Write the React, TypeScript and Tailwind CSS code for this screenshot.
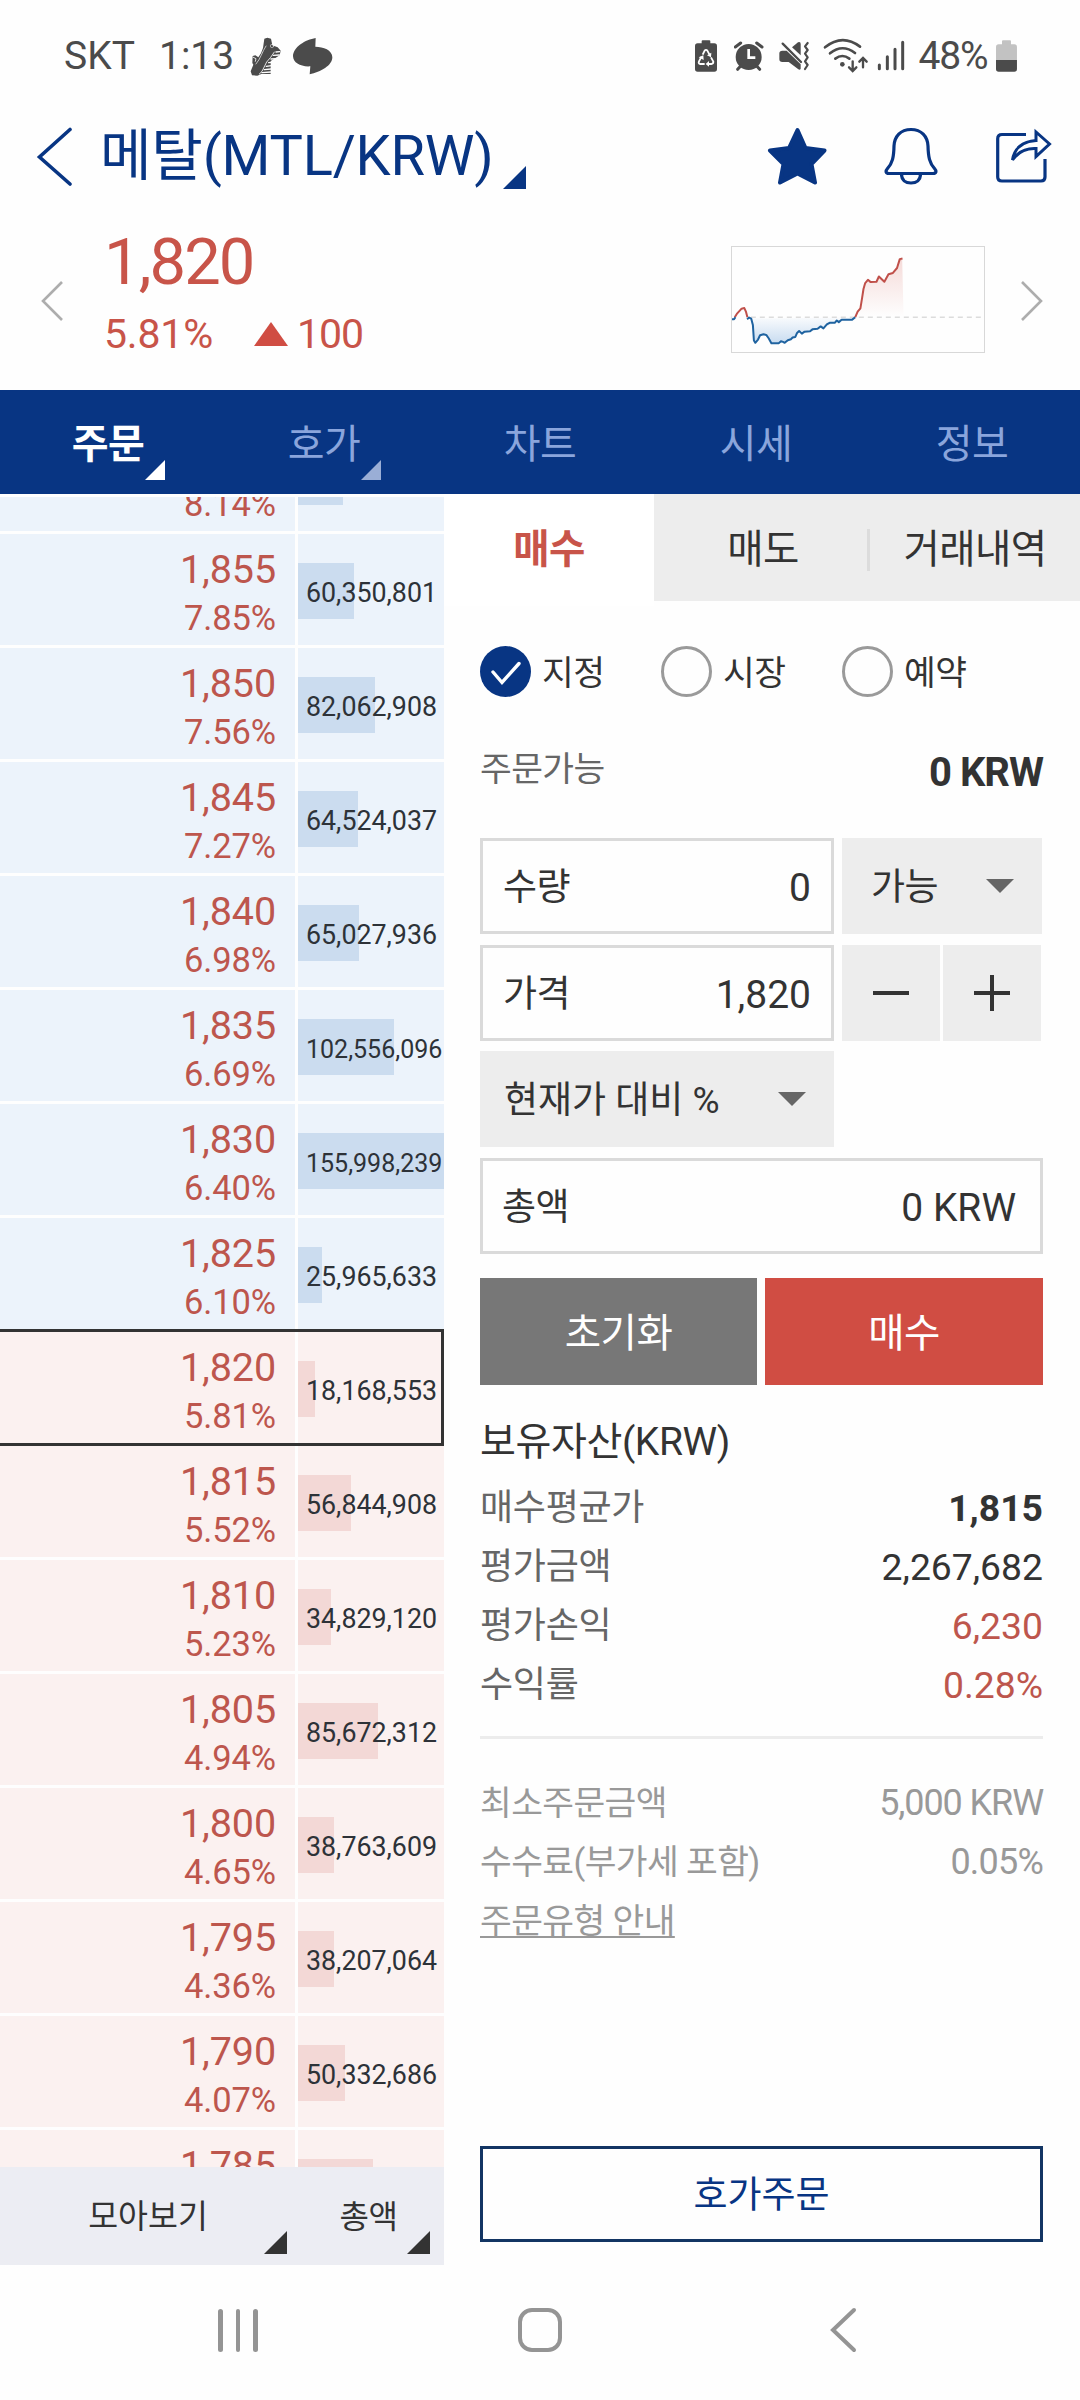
import React from "react";

type Level = { price: string; rate: string; volume: string; amount: number; side: "ask" | "bid"; current?: boolean };

const MAX_AMOUNT = 155998239;

// The first and last levels are scrolled partly out of view, so they carry only their visible fields.
const levels: Level[] = [
  { price: "", rate: "8.14%", volume: "", amount: 48310274, side: "ask" },
  { price: "1,855", rate: "7.85%", volume: "60,350,801", amount: 60350801, side: "ask" },
  { price: "1,850", rate: "7.56%", volume: "82,062,908", amount: 82062908, side: "ask" },
  { price: "1,845", rate: "7.27%", volume: "64,524,037", amount: 64524037, side: "ask" },
  { price: "1,840", rate: "6.98%", volume: "65,027,936", amount: 65027936, side: "ask" },
  { price: "1,835", rate: "6.69%", volume: "102,556,096", amount: 102556096, side: "ask" },
  { price: "1,830", rate: "6.40%", volume: "155,998,239", amount: 155998239, side: "ask" },
  { price: "1,825", rate: "6.10%", volume: "25,965,633", amount: 25965633, side: "ask" },
  { price: "1,820", rate: "5.81%", volume: "18,168,553", amount: 18168553, side: "bid", current: true },
  { price: "1,815", rate: "5.52%", volume: "56,844,908", amount: 56844908, side: "bid" },
  { price: "1,810", rate: "5.23%", volume: "34,829,120", amount: 34829120, side: "bid" },
  { price: "1,805", rate: "4.94%", volume: "85,672,312", amount: 85672312, side: "bid" },
  { price: "1,800", rate: "4.65%", volume: "38,763,609", amount: 38763609, side: "bid" },
  { price: "1,795", rate: "4.36%", volume: "38,207,064", amount: 38207064, side: "bid" },
  { price: "1,790", rate: "4.07%", volume: "50,332,686", amount: 50332686, side: "bid" },
  { price: "1,785", rate: "", volume: "", amount: 80204115, side: "bid" },
];

function Corner({ className }: { className: string }) {
  return (
    <svg viewBox="0 0 10 10" preserveAspectRatio="none" className={className} fill="currentColor">
      <path d="M10 0V10H0Z" />
    </svg>
  );
}

function StatusBar() {
  return (
    <div className="mt-[30px] flex h-[52px] items-center text-[39px] leading-[52px] text-[#4b4b4b]">
      <span className="ml-[64px] w-[95px] tracking-[0px]">SKT</span>
      <span className="w-[81px] tracking-[0px]">1:13</span>
      <svg viewBox="0 0 300 156" className="h-[52px] w-[100px]" fill="currentColor">
        <path d="M73 26 82 23 93 26 97 46 113 52 122 62 119 76 92 93 92 132H64L52 137 36 136 32 124 40 104 37 99 38 78 46 76 55 82 63 70 69 54Z" />
        <g fill="none" stroke="#fefefe" strokeLinecap="round">
          <path d="M103 66 92 82 80 96 66 124 58 132" strokeWidth="2.5" />
          <path d="M108 66 119 65M100 76 118 75M93 87 110 86M86 98 96 97M79 109 94 107M73 119 93 117M66 128 93 126" strokeWidth="4" />
          <path d="M78 48C66 66 62 86 48 102" strokeWidth="2" />
          <path d="M40 82 48 86 46 94" strokeWidth="2.500" />
          <circle cx="96" cy="48" r="5" strokeWidth="1.500" />
        </g>
        <path d="M227 24 226 50C250 50 277 60 277 82 277 107 242 126 209 133L211 109C182 111 160 99 159 79 160 51 196 29 227 24Z" />
      </svg>
      <svg viewBox="30 0 66 156" className="ml-[355px] h-[52px] w-[22px]" fill="currentColor">
        <path d="M50 34Q50 31 53 31H73Q76 31 76 34V40H88Q96 40 96 48V117Q96 125 88 125H38Q30 125 30 117V48Q30 40 38 40H50Z" />
        <g fill="none" stroke="#fff" strokeWidth="5.5" strokeLinejoin="round">
          <path d="M53 74 59 62Q63 57 67 62L73 73" />
          <path d="M78 82 85 95Q85 101 79 102H69" />
          <path d="M59 102H46Q39 101 42 94L49 81" />
        </g>
        <path d="M79 68 78 82 66 76ZM72 93V110L62 102ZM41 82 55 76 56 90Z" fill="#fff" />
      </svg>
      <svg viewBox="146 0 90 156" className="ml-[17px] h-[52px] w-[30px]" fill="currentColor">
        <circle cx="190" cy="81" r="39" />
        <path d="M150 51 166 39M214 39 230 51M166 108 157 118M214 108 223 118" stroke="currentColor" strokeWidth="9" strokeLinecap="round" />
        <path d="M190 57V83H210" fill="none" stroke="#fff" strokeWidth="8" />
      </svg>
      <svg viewBox="280 0 92 156" className="ml-[15px] h-[52px] w-[30.7px]" fill="currentColor">
        <path d="M290 62H303L345 103V116Q343 121 338 118L309 96H290Q281 96 281 88V70Q281 62 290 62Z" />
        <path d="M319 52 337 37Q345 34 345 42V76Z" />
        <path d="M291 41 346 96" stroke="currentColor" strokeWidth="7" strokeLinecap="round" />
        <path d="M366 39 358 49 366 60 358 71 366 82 358 94 366 105 358 117" fill="none" stroke="currentColor" strokeWidth="6.5" strokeLinecap="round" strokeLinejoin="round" />
      </svg>
      <svg viewBox="412 0 248 156" className="ml-[13px] h-[52px] w-[82.7px]" fill="none" stroke="currentColor" strokeWidth="8" strokeLinecap="round">
        <path d="M418 52Q470 10 523 50M433 70Q470 40 508 69M449 86Q470 70 491 86" />
        <circle cx="470" cy="103" r="7" fill="currentColor" stroke="none" />
        <path d="M501 94V122M490 112 501 123 512 112M532 112V85M521 95 532 84 543 95" strokeWidth="7" />
        <path d="M581 105V116M605 80V116M628 58V116M651 37V116" strokeWidth="9" />
      </svg>
      <span className="ml-[13px] w-[78px] tracking-[-1.1px]">48%</span>
      <svg viewBox="936 0 64 156" className="h-[52px] w-[21.3px]">
        <path d="M954 34Q954 31 957 31H978Q981 31 981 34V43H991Q999 43 999 51V90H936V51Q936 43 944 43H954Z" fill="#c2c2c2" />
        <path d="M936 90H999V117Q999 125 991 125H944Q936 125 936 117Z" fill="currentColor" />
      </svg>
    </div>
  );
}

function TitleRow() {
  return (
    <div className="mt-[38px] flex h-[72px] text-[#083583]">
      <svg viewBox="0 0 36 60" className="ml-[36px] mt-[6px] h-[60px] w-[36px]" fill="none" stroke="currentColor" strokeWidth="3.6" strokeLinecap="round">
        <path d="M34 3.500 3.500 31 34 58" strokeLinejoin="miter" />
      </svg>
      <div className="ml-[28px] w-[403px] text-[56px] leading-[73px] tracking-[-0.2px] whitespace-nowrap">메탈(MTL/KRW)</div>
      <Corner className="mt-[46px] h-[23px] w-[23px]" />
      <svg viewBox="0 0 60 58" className="ml-[241px] mt-[7px] h-[58px] w-[60px]" fill="currentColor" stroke="currentColor" strokeWidth="4" strokeLinejoin="round">
        <path d="M30.5 3 38.5 21 57.500 23.500 44.500 37 48 55.500 30.500 46.500 13 55.500 16.500 37 3 23.500 22 21Z" />
      </svg>
      <svg viewBox="0 0 54 58" className="ml-[57px] mt-[7px] h-[58px] w-[54px]" fill="none" stroke="currentColor" strokeWidth="3.2" strokeLinejoin="round">
        <path d="M27 2.500C16.500 2.500 10.500 9.500 10 19 9.800 30 8.500 36 3.500 41.500 1 44.500 2 46.500 5 46.500H49C52 46.500 53 44.500 50.500 41.500 45.500 36 44.300 30 44 19 43.500 9.500 37.500 2.500 27 2.500Z" />
        <path d="M17.500 47C17.500 53 21.500 56 27 56S36.500 53 36.500 47" />
      </svg>
      <svg viewBox="0 0 58 58" className="ml-[57px] mt-[7px] h-[58px] w-[58px]" fill="none" stroke="currentColor" strokeWidth="3.2">
        <path d="M31 7.500H7Q2.700 7.500 2.700 11.800V50Q2.700 54 7 54H46Q50 54 50 50V32" />
        <path d="M17.500 33C19 22 27 14.500 41 13.500V5L54.500 17 41 29.500V21.500C31 21 23 25 17.500 33Z" strokeWidth="3" />
      </svg>
    </div>
  );
}

function Sparkline() {
  return (
    <svg viewBox="0 0 736 320" preserveAspectRatio="none" className="h-[107px] w-[254px] border border-[#d8d8d8]">
      <defs>
        <linearGradient id="up" x1="0" y1="0" x2="0" y2="1">
          <stop offset="0" stopColor="#d04d43" stopOpacity=".2" />
          <stop offset="1" stopColor="#d04d43" stopOpacity="0" />
        </linearGradient>
        <linearGradient id="down" x1="0" y1="0" x2="0" y2="1">
          <stop offset="0" stopColor="#2a78c8" stopOpacity=".02" />
          <stop offset="1" stopColor="#2a78c8" stopOpacity=".25" />
        </linearGradient>
      </defs>
      <path d="M361 214 368 198 376 185 384 135 390 110 397 100 405 106 422 106 429 90 445 106 457 84 472 79 484 62 490 37 497 35 501 210Z" fill="url(#up)" />
      <path d="M55 218 64 270 68 292 82 268H100L115 292H140L155 290 185 275 195 260 240 252 280 240 305 230 330 222H355L361 214Z" fill="url(#down)" />
      <path d="M55 214H736" stroke="#dcdcdc" strokeWidth="1.5" strokeDasharray="5 4" vectorEffect="non-scaling-stroke" />
      <g fill="none" strokeWidth="2" strokeLinejoin="round">
        <path d="M8 214 14 204 28 188 36 186 41 198 45 214" stroke="#c0504a" vectorEffect="non-scaling-stroke" />
        <path d="M0 220H6L10 214" stroke="#1f63a0" vectorEffect="non-scaling-stroke" />
        <path d="M44 220 50 215 56 218 61 238 64 285 68 292 76 282 82 269 92 266 100 268 107 278 115 293H137L143 287 149 289 154 292 163 284 172 281 177 276 185 274 190 262 196 256 204 264 212 258 228 257 235 251 250 249 259 242 267 248 277 236 285 231 300 231 306 224 312 229 320 222H350L360 214" stroke="#1f63a0" vectorEffect="non-scaling-stroke" />
        <path d="M360 214 367 197 375 187 380 155 384 128 389 110 397 100 405 107 422 106 429 90 445 106 457 83 470 79 482 64 490 37 498 35" stroke="#c0504a" vectorEffect="non-scaling-stroke" />
      </g>
    </svg>
  );
}

function Summary() {
  return (
    <div className="mt-[38px] flex h-[160px] text-[#c85449]">
      <svg viewBox="0 0 22 40" className="ml-[41px] mt-[51px] h-[40px] w-[22px]" fill="none" stroke="#adadad" strokeWidth="2.6">
        <path d="M21 1 2 20 21 39" />
      </svg>
      <div className="ml-[41px] w-[600px]">
        <div className="text-[65px] leading-[64px] tracking-[-1.9px]">1,820</div>
        <div className="mt-[16px] flex items-center text-[41px] leading-[48px] tracking-[-0.2px]">
          <span className="w-[150px]">5.81%</span>
          <svg viewBox="0 0 34 24" className="h-[24px] w-[34px]" fill="#d04d43"><path d="M17 0 34 24H0Z" /></svg>
          <span className="ml-[9px] tracking-[-1px]">100</span>
        </div>
      </div>
      <div className="ml-[27px] mt-[16px]"><Sparkline /></div>
      <svg viewBox="0 0 22 40" className="ml-[36px] mt-[51px] h-[40px] w-[22px]" fill="none" stroke="#adadad" strokeWidth="2.6">
        <path d="M1 1 20 20 1 39" />
      </svg>
    </div>
  );
}

function NavTabs() {
  return (
    <nav className="grid h-[104px] grid-cols-5 bg-[#083583] text-center text-[40px] leading-[109px] tracking-[-0.5px] text-[#8aa5dc]">
      <div className="relative font-bold text-white">
        주문
        <Corner className="absolute left-[145px] top-[70px] h-[20px] w-[20px]" />
      </div>
      <div className="relative">
        호가
        <Corner className="absolute left-[145px] top-[70px] h-[20px] w-[20px] text-[#9aaed6]" />
      </div>
      <div>차트</div>
      <div>시세</div>
      <div>정보</div>
    </nav>
  );
}

function LevelRow({ level }: { level: Level }) {
  const ask = level.side === "ask";
  const cell = ask ? "bg-[#ecf3fb]" : "bg-[#fbf1f0]";
  const bar = ask ? "bg-[#cbdcef]" : "bg-[#f3d8d6]";
  const long = level.volume.length > 10;
  return (
    <div className="relative mb-[3px] flex h-[111px] shrink-0 gap-[3px]">
      <div className={`w-[295px] pr-[19px] pt-[15px] text-right text-[#bd564d] ${cell}`}>
        <div className="h-[42px] text-[39.5px] leading-[42px] tracking-[-0.1px]">{level.price}</div>
        <div className="mt-[7px] h-[40px] text-[34.5px] leading-[41px] tracking-[-0.1px]">{level.rate}</div>
      </div>
      <div className={`relative w-[146px] ${cell}`}>
        <div className={`mt-[29px] h-[56px] ${bar}`} style={{ width: `${(level.amount / MAX_AMOUNT) * 100}%` }} />
        <span className={`absolute left-[8px] top-[39px] leading-[41px] text-[#2d3238] ${long ? "text-[25px]" : "text-[26.8px]"}`}>{level.volume}</span>
      </div>
      {level.current && <div className="absolute -left-[3px] -top-[3px] h-[117px] w-[447px] border-[3px] border-[#333]" />}
    </div>
  );
}

function OrderBook() {
  return (
    <section className="w-[444px] pt-[3px]">
      <div className="h-[1670px] overflow-hidden">
        <div className="-mt-[77px] flex flex-col">
          {levels.map((l) => (
            <LevelRow key={l.amount} level={l} />
          ))}
        </div>
      </div>
      <div className="flex h-[98px] bg-[#ecedf3] leading-[101px] text-[#333]">
        <div className="relative w-[296px] text-center text-[32.5px]">
          모아보기
          <Corner className="absolute left-[264px] top-[64px] h-[23px] w-[23px]" />
        </div>
        <div className="relative w-[148px] text-center text-[32px] tracking-[-0.5px]">
          <span className="mr-[3px]">총액</span>
          <Corner className="absolute left-[111px] top-[64px] h-[23px] w-[23px]" />
        </div>
      </div>
    </section>
  );
}

function Radio({ label, on }: { label: string; on?: boolean }) {
  return (
    <div className="flex w-[181px] items-center">
      {on ? (
        <svg viewBox="0 0 51 51" className="h-[51px] w-[51px]">
          <circle cx="25.5" cy="25.5" r="25.5" fill="#083583" />
          <path d="M13 26 22 36.5 39 17.5" fill="none" stroke="#fff" strokeWidth="3.4" strokeLinecap="round" />
        </svg>
      ) : (
        <div className="h-[51px] w-[51px] rounded-full border-[3px] border-[#9a9a9a]" />
      )}
      <span className="ml-[11px] pt-[3px] leading-[51px]">{label}</span>
    </div>
  );
}

function Caret() {
  return (
    <svg viewBox="0 0 28 14" className="h-[14px] w-[28px]" fill="#666"><path d="M0 0H28L14 14Z" /></svg>
  );
}

function OrderForm() {
  return (
    <div className="mt-[49px] flex flex-col text-[37px] leading-[90px] tracking-[-0.5px] text-[#333]">
      <div className="flex gap-[8px]">
        <div className="flex h-[96px] w-[354px] justify-between border-[3px] border-[#dadada] pl-[20px] pr-[20px] pt-[2px]">
          <span>수량</span><span className="text-[39px] tracking-[0px]">0</span>
        </div>
        <div className="flex h-[96px] w-[200px] items-center justify-between bg-[#ededed] pl-[29px] pr-[28px]">
          <span className="mt-[4px]">가능</span><Caret />
        </div>
      </div>
      <div className="mt-[11px] flex gap-[8px]">
        <div className="flex h-[96px] w-[354px] justify-between border-[3px] border-[#dadada] pl-[20px] pr-[20px] pt-[2px]">
          <span>가격</span><span className="text-[39px] tracking-[0px]">1,820</span>
        </div>
        <div className="flex gap-[3px]">
          <div className="flex h-[96px] w-[98px] items-center justify-center bg-[#ededed]"><div className="h-[4px] w-[36px] bg-[#333]" /></div>
          <div className="flex h-[96px] w-[98px] items-center justify-center bg-[#ededed]">
            <svg viewBox="0 0 36 36" className="h-[36px] w-[36px]" stroke="#333" strokeWidth="4"><path d="M0 18H36M18 0V36" /></svg>
          </div>
        </div>
      </div>
      <div className="mt-[10px] flex h-[96px] w-[354px] items-center justify-between bg-[#ededed] pl-[24px] pr-[28px]">
        <span className="mt-[3px] tracking-[0px]">현재가 대비 %</span><Caret />
      </div>
      <div className="mt-[11px] flex h-[96px] w-[563px] justify-between border-[3px] border-[#dadada] pl-[19px] pr-[24px] pt-[2px]">
        <span>총액</span><span className="text-[39px] tracking-[0px]">0 KRW</span>
      </div>
      <div className="mt-[24px] flex gap-[8px] text-center text-[39.5px] leading-[111px] text-white">
        <button className="h-[107px] w-[277px] bg-[#777]">초기화</button>
        <button className="h-[107px] w-[278px] bg-[#d04d43]">매수</button>
      </div>
    </div>
  );
}

function InfoRow({ label, value, tone }: { label: string; value: string; tone: string }) {
  return (
    <div className="flex justify-between">
      <span className="text-[36px] tracking-[-0.3px] text-[#666]">{label}</span>
      <span className={`text-[37.3px] ${tone}`}>{value}</span>
    </div>
  );
}

function OrderPanel() {
  return (
    <section className="w-[636px] text-[#333]">
      <div className="grid h-[107px] grid-cols-[210px_213px_213px] bg-[#ededed] text-center text-[39.5px] leading-[112px] tracking-[-0.6px]">
        <div className="bg-white font-bold text-[#c85449]">매수</div>
        <div className="pl-[5px]">매도</div>
        <div className="flex items-center">
          <div className="h-[42px] w-[3px] bg-[#dcdcdc]" />
          <span className="flex-1">거래내역</span>
        </div>
      </div>
      <div className="ml-[36px] flex w-[563px] flex-col">
        <div className="mt-[45px] flex h-[51px] text-[34.5px] tracking-[-0.4px]">
          <Radio label="지정" on />
          <Radio label="시장" />
          <Radio label="예약" />
        </div>
        <div className="mt-[48px] flex h-[44px] justify-between">
          <span className="text-[34.5px] leading-[49px] tracking-[-0.6px] text-[#666]">주문가능</span>
          <span className="text-[40px] font-bold leading-[56px] tracking-[-1px]">0 KRW</span>
        </div>
        <OrderForm />
        <div className="mt-[33px] text-[39px] leading-[48px] tracking-[-0.4px]">보유자산(KRW)</div>
        <div className="mt-[13px] text-right leading-[59px]">
          <InfoRow label="매수평균가" value="1,815" tone="font-bold" />
          <InfoRow label="평가금액" value="2,267,682" tone="" />
          <InfoRow label="평가손익" value="6,230" tone="text-[#bd564d]" />
          <InfoRow label="수익률" value="0.28%" tone="text-[#bd564d]" />
        </div>
        <div className="mt-[21px] h-[3px] bg-[#ececec]" />
        <div className="mt-[35px] text-[34.5px] leading-[59px] tracking-[-0.6px] text-[#999]">
          <div className="flex justify-between"><span>최소주문금액</span><span className="text-[36px] tracking-[-1.1px]">5,000 KRW</span></div>
          <div className="flex justify-between"><span>수수료(부가세 포함)</span><span className="text-[36px] tracking-[-0.8px]">0.05%</span></div>
          <div><span className="underline decoration-2 underline-offset-[3px]">주문유형 안내</span></div>
        </div>
        <button className="mt-[195px] h-[96px] border-[3px] border-[#133563] text-[37px] leading-[93px] text-[#083583]">호가주문</button>
      </div>
    </section>
  );
}

function SystemNav() {
  return (
    <div className="flex h-[130px] items-center text-[#949494]">
      <div className="ml-[218px] flex gap-[13px]">
        <div className="h-[43px] w-[4.5px] rounded-full bg-[#949494]" />
        <div className="h-[43px] w-[4.5px] rounded-full bg-[#949494]" />
        <div className="h-[43px] w-[4.5px] rounded-full bg-[#949494]" />
      </div>
      <div className="ml-[260px] h-[44px] w-[44px] rounded-[14px] border-4 border-[#949494]" />
      <svg viewBox="0 0 28 46" className="ml-[267px] h-[46px] w-[28px]" fill="none" stroke="currentColor" strokeWidth="4" strokeLinecap="round">
        <path d="M25 3 4 23 25 43" />
      </svg>
    </div>
  );
}

export default function App() {
  return (
    <div className="flex h-[2400px] w-[1080px] flex-col overflow-hidden bg-[#fefefe] font-[Roboto,'Noto_Sans_CJK_KR',sans-serif]">
      <StatusBar />
      <TitleRow />
      <Summary />
      <NavTabs />
      <main className="flex h-[1771px]">
        <OrderBook />
        <OrderPanel />
      </main>
      <SystemNav />
    </div>
  );
}
